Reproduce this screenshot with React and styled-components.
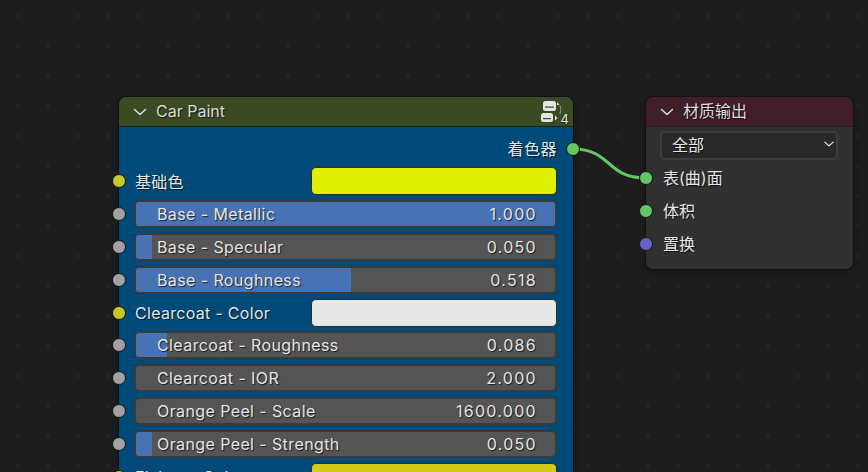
import React from "react";
import styled, { createGlobalStyle } from "styled-components";

const GlobalStyle = createGlobalStyle`
    html, body {
        margin: 0;
        padding: 0;
        background: #1d1d1d;
    }
`;

const fontStack = `Inter, "Noto Sans CJK SC", "Noto Sans", sans-serif`;

const rows = [
    { type: "color", label: "基础色", color: "#deef00", socket: "#c7c729" },
    { type: "slider", label: "Base - Metallic", value: "1.000", fill: 100 },
    { type: "slider", label: "Base - Specular", value: "0.050", fill: 3.9 },
    { type: "slider", label: "Base - Roughness", value: "0.518", fill: 51.3 },
    { type: "color", label: "Clearcoat - Color", color: "#e8e8e8", socket: "#c7c729" },
    { type: "slider", label: "Clearcoat - Roughness", value: "0.086", fill: 7.4 },
    { type: "slider", label: "Clearcoat - IOR", value: "2.000", fill: 0 },
    { type: "slider", label: "Orange Peel - Scale", value: "1600.000", fill: 0 },
    { type: "slider", label: "Orange Peel - Strength", value: "0.050", fill: 3.9 },
    { type: "color", label: "Flakes - Color", color: "#d3cb17", socket: "#c7c729" },
];

const Chevron = ({ size = 16, weight = 1.4 }) => (
    <svg width={size} height={size} viewBox="0 0 16 16" fill="none">
        <path d="M2.5 5.5 L8 10.5 L13.5 5.5" stroke="#e4e4e4" strokeWidth={weight} strokeLinecap="round" strokeLinejoin="round" />
    </svg>
);

const GroupIcon = () => (
    <svg width="24" height="24" viewBox="0 0 24 24" fill="none">
        <rect x="2" y="1" width="13" height="10" rx="2.5" fill="#e6e6e6" />
        <rect x="4" y="6.5" width="9" height="1.2" fill="#3a4a22" />
        <rect x="0" y="13" width="12" height="9" rx="2.5" fill="#e6e6e6" />
        <rect x="2" y="18" width="8" height="1.2" fill="#3a4a22" />
        <path d="M16 2 L18.5 5 L16 5 Z" fill="#e6e6e6" />
        <path d="M14 15.5 L16.5 18 L14 20.5 Z" fill="#e6e6e6" />
        <path d="M19 5 Q20.5 9 19 14" stroke="#8d9580" strokeWidth="1" />
    </svg>
);

export default function App() {
    return (
        <Canvas>
            <GlobalStyle />
            <Wire width="868" height="472">
                <path d="M573 149 C 612 149, 606 178, 645 178" stroke="#63c763" strokeWidth="3" fill="none" />
            </Wire>

            <Node $left={119} $width={454} $height={420}>
                <NodeHeader $color="#3a4a22">
                    <Chevron />
                    <NodeTitle>Car Paint</NodeTitle>
                    <GroupBadge>
                        <GroupIcon />
                        <GroupCount>4</GroupCount>
                    </GroupBadge>
                </NodeHeader>
                <PaintBody>
                    <OutputRow>
                        <RaisedText>着色器</RaisedText>
                        <Socket $side="right" $color="#63c763" />
                    </OutputRow>
                    {rows.map((row) => (
                        <InputRow key={row.label}>
                            <Socket $side="left" $color={row.type === "color" ? row.socket : "#a1a1a1"} />
                            {row.type === "color" ? (
                                <>
                                    <ColorLabel>{row.label}</ColorLabel>
                                    <Swatch $color={row.color} />
                                </>
                            ) : (
                                <Slider>
                                    <SliderFill style={{ width: `${row.fill}%` }} />
                                    <SliderLabel>{row.label}</SliderLabel>
                                    <SliderValue>{row.value}</SliderValue>
                                </Slider>
                            )}
                        </InputRow>
                    ))}
                </PaintBody>
            </Node>

            <Node $left={646} $width={207} $height={172}>
                <NodeHeader $color="#3f1d29">
                    <Chevron />
                    <NodeTitle>材质输出</NodeTitle>
                </NodeHeader>
                <OutputBody>
                    <Dropdown>
                        全部
                        <Chevron size={12} weight={1.8} />
                    </Dropdown>
                    <SurfaceRow $first>
                        <Socket $side="left2" $color="#63c763" />
                        <SurfaceText>表(曲)面</SurfaceText>
                    </SurfaceRow>
                    <SurfaceRow>
                        <Socket $side="left2" $color="#63c763" />
                        <SurfaceText>体积</SurfaceText>
                    </SurfaceRow>
                    <SurfaceRow>
                        <Socket $side="left2" $color="#6363c7" />
                        <SurfaceText>置换</SurfaceText>
                    </SurfaceRow>
                </OutputBody>
            </Node>
        </Canvas>
    );
}

const Canvas = styled.div`
    position: relative;
    width: 868px;
    height: 472px;
    overflow: hidden;
    background-color: #1d1d1d;
    background-image: radial-gradient(circle at center, #242424 0, #242424 1.5px, transparent 2px);
    background-size: 30px 30px;
    background-position: 3px 1px;
    font-family: ${fontStack};
    font-size: 16px;
    color: #e6e6e6;
    text-shadow: 1px 1px 1px rgba(0, 0, 0, 0.7);
`;

const Wire = styled.svg`
    position: absolute;
    left: 0;
    top: 0;
`;

const Node = styled.div`
    position: absolute;
    left: ${(p) => p.$left}px;
    top: 97px;
    width: ${(p) => p.$width}px;
    height: ${(p) => p.$height}px;
    border-radius: 7px;
    box-shadow: 0 0 0 1px #111111, 0 2px 6px rgba(0, 0, 0, 0.4);
    display: flex;
    flex-direction: column;
`;

const NodeHeader = styled.div`
    height: 30px;
    flex: none;
    display: flex;
    align-items: center;
    padding: 0 8px 0 13px;
    gap: 8px;
    background: ${(p) => p.$color};
    border-radius: 7px 7px 0 0;
    border-bottom: 1px solid #1b2412;
    box-sizing: border-box;
`;

const NodeTitle = styled.span`
    line-height: 29px;
    color: #dcdcdc;
`;

const GroupBadge = styled.div`
    margin-left: auto;
    position: relative;
    width: 24px;
    height: 24px;
`;

const GroupCount = styled.span`
    position: absolute;
    right: -4px;
    bottom: -2px;
    font-size: 13px;
    line-height: 14px;
`;

const PaintBody = styled.div`
    flex: 1;
    background: #004a7a;
    padding: 5px 16px 0 15px;
    border-radius: 0 0 7px 7px;
`;

const OutputRow = styled.div`
    position: relative;
    height: 33px;
    display: flex;
    align-items: center;
    justify-content: flex-end;
    margin-right: -16px;
    padding-right: 16px;
    letter-spacing: 0.5px;
`;

const RaisedText = styled.span`
    margin-top: -2px;
`;

const InputRow = styled.div`
    position: relative;
    height: 32.8px;
    display: flex;
    align-items: center;
`;

const Socket = styled.span`
    position: absolute;
    top: 50%;
    width: 12px;
    height: 12px;
    margin-top: -7px;
    border-radius: 50%;
    border: 1px solid #141414;
    background: ${(p) => p.$color};
    ${(p) => p.$side === "left" && "left: -22px;"}
    ${(p) => p.$side === "left2" && "left: -7px;"}
    ${(p) => p.$side === "right" && "right: -7px;"}
`;

const ColorLabel = styled.span`
    flex: 1;
    padding-left: 1px;
    letter-spacing: 0.3px;
`;

const Swatch = styled.div`
    width: 246px;
    height: 28px;
    box-sizing: border-box;
    border: 1px solid #2e2e2e;
    border-radius: 5px;
    background: ${(p) => p.$color};
`;

const Slider = styled.div`
    position: relative;
    flex: 1;
    height: 28px;
    box-sizing: border-box;
    border: 2px solid #3a3a3a;
    border-radius: 5px;
    background: #545454;
    overflow: hidden;
    display: flex;
    align-items: center;
    justify-content: space-between;
    padding: 0 18px 0 21px;
`;

const SliderFill = styled.div`
    position: absolute;
    left: 0;
    top: 0;
    bottom: 0;
    background: #4772b3;
`;

const SliderLabel = styled.span`
    position: relative;
    letter-spacing: 0.4px;
`;

const SliderValue = styled.span`
    position: relative;
    letter-spacing: 1.3px;
`;

const OutputBody = styled.div`
    flex: 1;
    background: #303030;
    padding: 4px 15px 0 14px;
    border-radius: 0 0 7px 7px;
`;

const Dropdown = styled.div`
    height: 29px;
    box-sizing: border-box;
    display: flex;
    align-items: center;
    justify-content: space-between;
    padding: 0 1px 3px 10px;
    background: #282828;
    border: 2px solid #3d3d3d;
    border-radius: 5px;
`;

const SurfaceRow = styled.div`
    position: relative;
    height: 32.9px;
    display: flex;
    align-items: center;
    margin: ${(p) => (p.$first ? "2px" : "0")} 0 0 -14px;
    padding-left: 17px;
`;

const SurfaceText = styled.span`
    margin-top: -2px;
`;
